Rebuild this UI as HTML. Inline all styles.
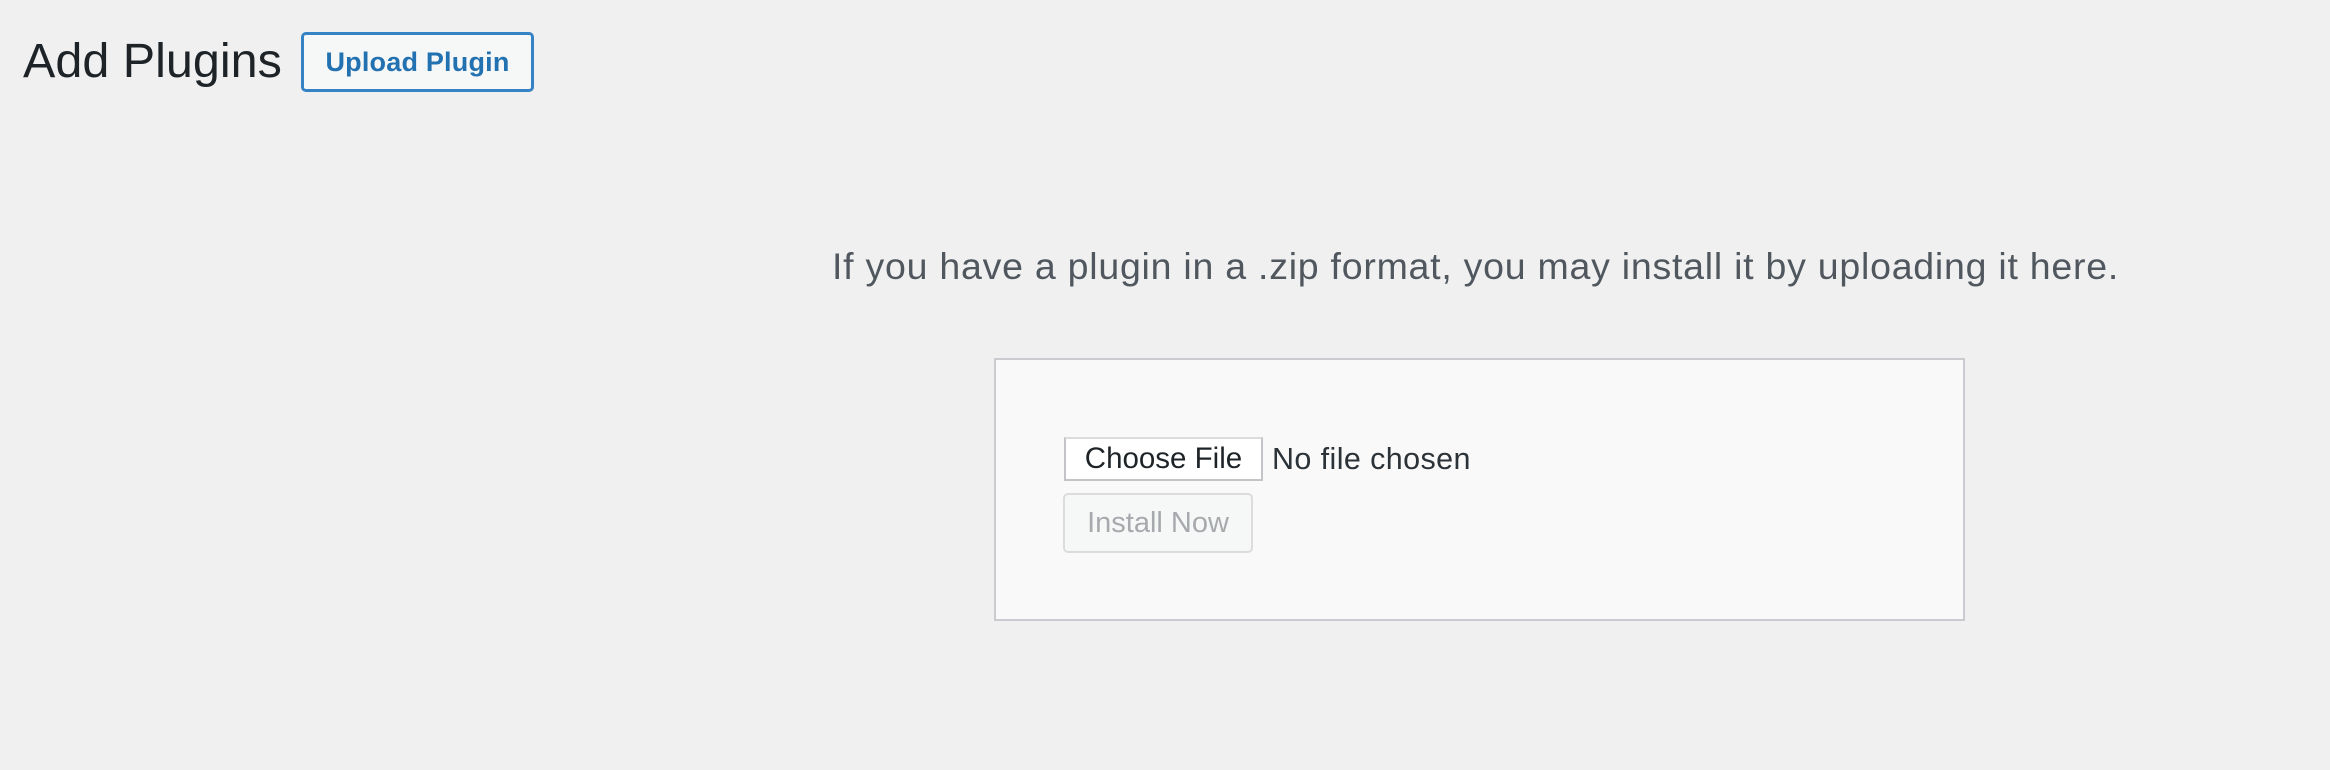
<!DOCTYPE html>
<html><head><meta charset="utf-8"><style>
html,body{margin:0;padding:0;width:2330px;height:770px;background:#f0f0f1;overflow:hidden;font-family:"Liberation Sans",sans-serif}
.abs{position:absolute;white-space:nowrap}
h1{position:absolute;left:23px;top:33px;margin:0;font-weight:400;font-size:48.5px;line-height:56px;color:#1d2327}
.up{position:absolute;left:301px;top:32px;width:233px;height:60px;box-sizing:border-box;border:3px solid #3582c4;border-radius:5px;background:#f6f7f7;color:#2271b1;font-weight:700;font-size:27px;letter-spacing:0.2px;line-height:54px;text-align:center}
p{position:absolute;left:832px;top:243px;margin:0;font-size:37.5px;letter-spacing:0.75px;line-height:46px;color:#50575e;white-space:nowrap}
.box{position:absolute;left:994px;top:358px;width:971px;height:263px;box-sizing:border-box;border:2px solid #c9cbcf;background:#f9f9f9}
.cf{position:absolute;left:1064px;top:437px;width:199px;height:44px;box-sizing:border-box;border:2px solid #c3c4c7;border-top-color:#dcdcde;background:#fff;font-size:29.5px;line-height:40px;text-align:center;color:#1d2327}
.nf{left:1272px;top:437px;font-size:30.5px;letter-spacing:0.4px;line-height:44px;color:#2c3338}
.in{position:absolute;left:1063px;top:493px;width:190px;height:60px;box-sizing:border-box;border:2px solid #dcdcde;border-radius:5px;background:#f6f7f7;color:#a7aaad;font-size:29px;line-height:56px;text-align:center}
</style></head><body>
<h1>Add Plugins</h1>
<div class="up">Upload Plugin</div>
<p>If you have a plugin in a .zip format, you may install it by uploading it here.</p>
<div class="box"></div>
<div class="cf">Choose File</div>
<div class="abs nf">No file chosen</div>
<div class="in">Install Now</div>
</body></html>
